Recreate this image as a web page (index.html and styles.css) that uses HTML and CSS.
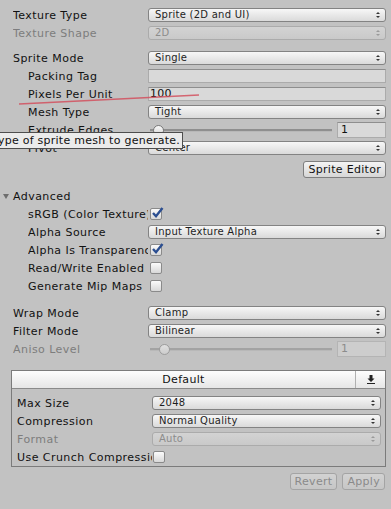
FILE: index.html
```html
<!DOCTYPE html>
<html>
  <head>
    <meta name="viewport" content="width=device-width, initial-scale=1.0">
    <link rel="stylesheet" href="styles.css">
  </head>
  <body>
    <div class="row"><span class="label">Texture Type</span><div class="popup">Sprite (2D and UI)</div></div>
    <div class="row disabled"><span class="label">Texture Shape</span><div class="popup">2D</div></div>

    <div class="row spaced"><span class="label">Sprite Mode</span><div class="popup">Single</div></div>
    <div class="row sub"><span class="label">Packing Tag</span><div class="field"></div></div>
    <div class="row sub"><span class="label">Pixels Per Unit</span><div class="field">100</div></div>
    <div class="row sub"><span class="label">Mesh Type</span><div class="popup">Tight</div></div>
    <div class="row sub">
      <span class="label">Extrude Edges</span>
      <div class="slider"><div class="track"></div><div class="thumb thumb-extrude"></div></div>
      <div class="field num">1</div>
    </div>
    <div class="row sub"><span class="label">Pivot</span><div class="popup">Center</div></div>
    <div class="button-row first"><button type="button" class="btn">Sprite Editor</button></div>

    <div class="row foldout"><span class="fold-arrow"></span><span class="fold-text">Advanced</span></div>
    <div class="row sub"><span class="label">sRGB (Color Texture)</span><span class="check on"><svg width="13" height="12" viewBox="0 0 13 12"><path d="M2 6 L5 9.2 L11.5 1" fill="none" stroke="#2b4e91" stroke-width="2.4"/></svg></span></div>
    <div class="row sub"><span class="label">Alpha Source</span><div class="popup">Input Texture Alpha</div></div>
    <div class="row sub"><span class="label">Alpha Is Transparency</span><span class="check on"><svg width="13" height="12" viewBox="0 0 13 12"><path d="M2 6 L5 9.2 L11.5 1" fill="none" stroke="#2b4e91" stroke-width="2.4"/></svg></span></div>
    <div class="row sub"><span class="label">Read/Write Enabled</span><span class="check"></span></div>
    <div class="row sub"><span class="label">Generate Mip Maps</span><span class="check"></span></div>

    <div class="row spaced-lg"><span class="label">Wrap Mode</span><div class="popup">Clamp</div></div>
    <div class="row"><span class="label">Filter Mode</span><div class="popup">Bilinear</div></div>
    <div class="row disabled">
      <span class="label">Aniso Level</span>
      <div class="slider"><div class="track"></div><div class="thumb thumb-aniso"></div></div>
      <div class="field num">1</div>
    </div>

    <div class="platform-box">
      <div class="box-header">
        <div class="tab">Default</div>
        <div class="tab-icon">
          <svg width="8" height="9" viewBox="0 0 8 9"><path d="M2.5 0 H5.5 V3.5 H7.5 L4 7 L0.5 3.5 H2.5 Z" fill="#222"/><rect x="0" y="8" width="8" height="1" fill="#222"/></svg>
        </div>
      </div>
      <div class="box-body">
        <div class="row"><span class="label">Max Size</span><div class="popup">2048</div></div>
        <div class="row"><span class="label">Compression</span><div class="popup">Normal Quality</div></div>
        <div class="row disabled"><span class="label">Format</span><div class="popup">Auto</div></div>
        <div class="row"><span class="label">Use Crunch Compression</span><span class="check"></span></div>
      </div>
    </div>

    <div class="button-row last">
      <button type="button" class="btn" disabled>Revert</button>
      <button type="button" class="btn" disabled>Apply</button>
    </div>

    <div class="tooltip">Type of sprite mesh to generate.</div>
    <svg class="scribble" width="391" height="509" viewBox="0 0 391 509"><path d="M19 104 Q95 100 199 95" fill="none" stroke="#d2505e" stroke-width="1.3" stroke-opacity="0.85"/></svg>
  </body>
</html>
```

FILE: styles.css
```css
body {
  margin: 0;
  padding-top: 6px;
  background-color: #c2c2c2;
  font-family: "DejaVu Sans", sans-serif;
  font-size: 11px;
  color: #111;
  position: relative;
  overflow: hidden;
}
.row {
  display: flex;
  align-items: center;
  height: 18px;
  padding: 0 5px 0 13px;
}
.row.sub {
  padding-left: 28px;
}
.row.spaced {
  margin-top: 7px;
}
.row.spaced-lg {
  margin-top: 9px;
}
.label, .fold-text {
  letter-spacing: 0.45px;
}
.label {
  flex: none;
  width: 135px;
  white-space: nowrap;
  overflow: hidden;
}
.row.sub .label {
  width: 120px;
}
.disabled .label {
  color: #7d7d7d;
}
.popup {
  flex: 1;
  position: relative;
  height: 12px;
  line-height: 12px;
  padding-left: 6px;
  border: 1px solid #838383;
  border-radius: 3px;
  background: linear-gradient(#f7f7f7, #dadada);
  font-size: 10px;
  letter-spacing: 0.25px;
  color: #1e1e1e;
}
.popup::before, .popup::after {
  content: "";
  position: absolute;
  right: 5px;
  border-left: 2px solid transparent;
  border-right: 2px solid transparent;
}
.popup::before {
  top: 3px;
  border-bottom: 2px solid #333;
}
.popup::after {
  bottom: 3px;
  border-top: 2px solid #333;
}
.disabled .popup {
  border-color: #ababab;
  background: linear-gradient(#d3d3d3, #c9c9c9);
  color: #8c8c8c;
}
.disabled .popup::before {
  border-bottom-color: #9a9a9a;
}
.disabled .popup::after {
  border-top-color: #9a9a9a;
}
.field {
  flex: 1;
  height: 12px;
  line-height: 12px;
  padding-left: 1px;
  border: 1px solid #ababab;
  border-top-color: #8e8e8e;
  background-color: #d9d9d9;
  letter-spacing: 0.3px;
}
.field.num {
  flex: none;
  width: 44px;
  height: 14px;
  line-height: 14px;
  padding-left: 3px;
  margin-left: 5px;
}
.disabled .field {
  background-color: #cdcdcd;
  color: #8c8c8c;
  border-color: #b4b4b4;
}
.slider {
  flex: 1;
  position: relative;
  height: 12px;
  margin-left: 2px;
}
.track {
  position: absolute;
  left: 0;
  right: 0;
  top: 5px;
  height: 2px;
  background-color: #8f8f8f;
  border-bottom: 1px solid #b8b8b8;
}
.thumb {
  position: absolute;
  top: 1px;
  width: 9px;
  height: 9px;
  border-radius: 50%;
  border: 1px solid #7a7a7a;
  background: linear-gradient(#fafafa, #d4d4d4);
}
.thumb-extrude {
  left: 3px;
}
.thumb-aniso {
  left: 9px;
}
.disabled .thumb {
  border-color: #9d9d9d;
  background: linear-gradient(#e0e0e0, #cccccc);
}
.disabled .track {
  background-color: #a3a3a3;
}
.check {
  flex: none;
  position: relative;
  width: 10px;
  height: 10px;
  margin-left: 2px;
  border: 1px solid #8a8a8a;
  border-radius: 2px;
  background: linear-gradient(#fbfbfb, #d8d8d8);
}
.check svg {
  position: absolute;
  left: 0;
  top: -2px;
}
.foldout {
  margin-top: 9px;
  position: relative;
}
.fold-arrow {
  position: absolute;
  left: 3px;
  top: 7px;
  border-left: 3px solid transparent;
  border-right: 3px solid transparent;
  border-top: 5px solid #6e6e6e;
}
.button-row {
  display: flex;
  justify-content: flex-end;
  gap: 5px;
  padding-right: 5px;
}
.button-row.first {
  margin-top: 4px;
}
.button-row.last {
  margin-top: 6px;
  padding-right: 6px;
}
.btn {
  height: 17px;
  padding: 0 4px;
  border: 1px solid #7e7e7e;
  border-radius: 3px;
  background: linear-gradient(#f4f4f4, #d6d6d6);
  font-family: "DejaVu Sans", sans-serif;
  font-size: 11px;
  letter-spacing: 0.3px;
  color: #111;
}
.btn:disabled {
  border-color: #a4a4a4;
  background: linear-gradient(#d2d2d2, #c6c6c6);
  color: #8a8a8a;
}
.platform-box {
  margin: 12px 5px 0 11px;
  border: 1px solid #7b7b7b;
}
.box-header {
  display: flex;
  height: 17px;
  border-bottom: 1px solid #8a8a8a;
  background: linear-gradient(#fdfdfd, #e6e6e6);
}
.tab {
  flex: 1;
  text-align: center;
  line-height: 17px;
  letter-spacing: 0.3px;
  color: #111;
}
.tab-icon {
  width: 29px;
  display: flex;
  align-items: center;
  justify-content: center;
  border-left: 1px solid #b0b0b0;
}
.box-body {
  padding: 5px 0 0 0;
}
.box-body .row {
  padding: 0 4px 0 5px;
}
.box-body .label {
  width: 135px;
}
.box-body .check {
  margin-left: 1px;
}
.tooltip {
  position: absolute;
  top: 132px;
  right: 208px;
  height: 15px;
  line-height: 15px;
  padding: 0 2px 0 3px;
  white-space: nowrap;
  letter-spacing: 0.25px;
  border: 1px solid #4e4e4e;
  background-color: #ebebeb;
  color: #111;
}
.scribble {
  position: absolute;
  left: 0;
  top: 0;
  pointer-events: none;
}
```
